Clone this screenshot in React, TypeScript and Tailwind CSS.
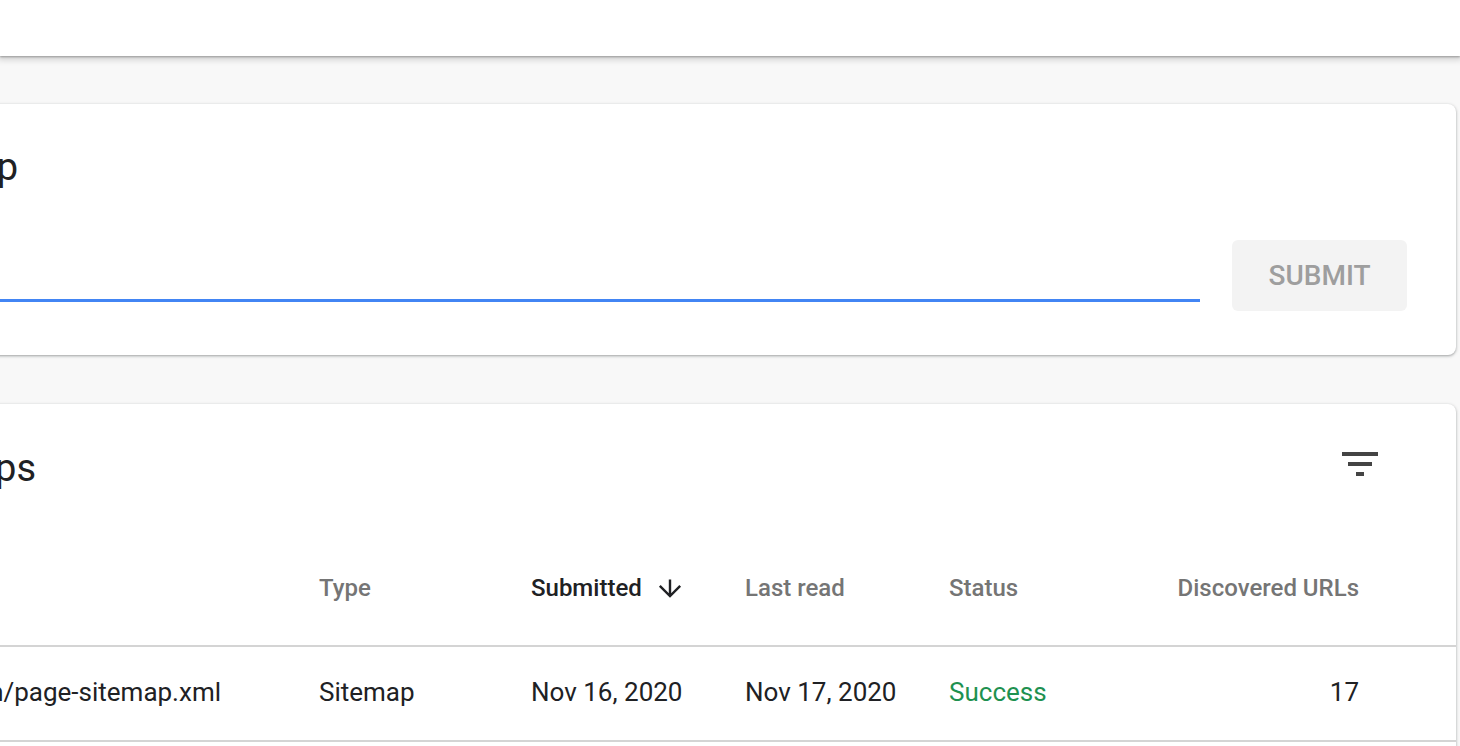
import React from "react";

const columns = [
  { key: "type", label: "Type" },
  { key: "submitted", label: "Submitted", active: true },
  { key: "lastRead", label: "Last read" },
];

const rows = [
  {
    url: "https://example.com/page-sitemap.xml",
    type: "Sitemap",
    submitted: "Nov 16, 2020",
    lastRead: "Nov 17, 2020",
    status: "Success",
    discovered: 17,
  },
];

function FilterIcon() {
  return (
    <svg width="48" height="48" viewBox="0 0 24 24" className="shrink-0 -mt-[6px]">
      <path fill="#444444" d="M10 18h4v-2h-4v2zM3 6v2h18V6H3zm3 7h12v-2H6v2z" />
    </svg>
  );
}

function ArrowDown() {
  return (
    <svg width="24" height="19" viewBox="0 0 24 19" fill="none" className="shrink-0">
      <path d="M12 0.5V17M1.8 6.8L12 17L22.2 6.8" stroke="#202124" strokeWidth="2.4" />
    </svg>
  );
}

// only the tail of the text is visible, the rest runs off the left edge
function Clipped({ text, className }: { text: string; className: string }) {
  return (
    <div className={`flex justify-end overflow-hidden ${className}`}>
      <span className="shrink-0 whitespace-nowrap">{text}</span>
    </div>
  );
}

export default function App() {
  return (
    <div className="h-[746px] w-full overflow-hidden bg-[#f8f8f8] font-['Roboto','Liberation_Sans',sans-serif] text-[#202124]">
      <header className="relative z-10 h-[56px] bg-white shadow-[0_1px_2px_rgba(0,0,0,0.3),0_2px_6px_2px_rgba(0,0,0,0.15)]" />

      <main className="flex flex-col gap-[49px] pt-[48px] pr-[4px]">
        <section className="-ml-[20px] rounded-r-lg bg-white pt-[41px] pr-[49px] pb-[44px] shadow-[0_1px_2px_0_rgba(60,64,67,0.3),0_1px_3px_1px_rgba(60,64,67,0.15)]">
          <Clipped text="Add a new sitemap" className="w-[38px] text-[38px] leading-[44px]" />
          <div className="mt-[51px] flex items-start gap-[32px]">
            <div className="h-[62px] flex-1 border-b-[3px] border-[#4285f4]" />
            <button className="h-[71px] w-[175px] rounded-md bg-[#f3f3f3] text-[28px] font-medium text-[#9e9e9e]">
              SUBMIT
            </button>
          </div>
        </section>

        <section className="-ml-[20px] rounded-r-lg bg-white pt-[42px] pb-[40px] shadow-[0_1px_2px_0_rgba(60,64,67,0.3),0_1px_3px_1px_rgba(60,64,67,0.15)]">
          <div className="flex items-start justify-between pr-[72px]">
            <Clipped text="Submitted sitemaps" className="w-[56px] text-[38px] leading-[44px]" />
            <FilterIcon />
          </div>

          <div className="mt-[86px]">
            <div className="grid grid-cols-[339px_212px_214px_204px_1fr] border-b-2 border-[#d4d4d4] pr-[97px] pb-[45px] text-[24px] font-medium leading-[24px] text-[#757575]">
              <div />
              {columns.map((c) => (
                <div key={c.key} className={c.active ? "flex items-center gap-[16px] text-[#202124]" : ""}>
                  {c.label}
                  {c.active && <ArrowDown />}
                </div>
              ))}
              <div className="flex justify-between">
                <span>Status</span>
                <span>Discovered URLs</span>
              </div>
            </div>

            {rows.map((r) => (
              <div
                key={r.url}
                className="grid grid-cols-[339px_212px_214px_204px_1fr] border-b-2 border-[#d4d4d4] pt-[31px] pr-[97px] pb-[34px] text-[26px] leading-[28px]"
              >
                <Clipped text={r.url} className="w-[241px]" />
                <div>{r.type}</div>
                <div>{r.submitted}</div>
                <div>{r.lastRead}</div>
                <div className="flex justify-between">
                  <span className="text-[#1e9150]">{r.status}</span>
                  <span>{r.discovered}</span>
                </div>
              </div>
            ))}
          </div>
        </section>
      </main>
    </div>
  );
}
